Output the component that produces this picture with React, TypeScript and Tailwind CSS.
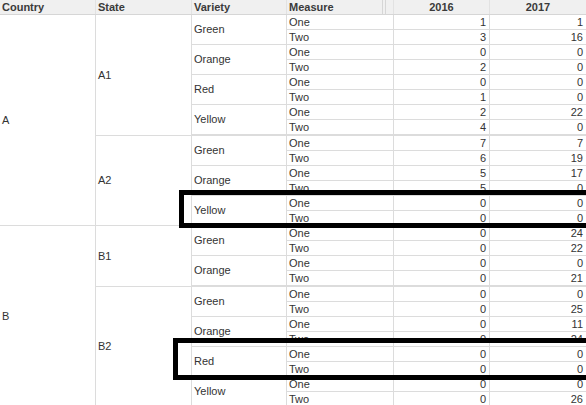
import React from "react";

type Variety = {
  name: string;
  one: [number, number];
  two: [number, number];
};

type State = { name: string; varieties: Variety[] };
type Country = { name: string; states: State[] };

const data: Country[] = [
  {
    name: "A",
    states: [
      {
        name: "A1",
        varieties: [
          { name: "Green", one: [1, 1], two: [3, 16] },
          { name: "Orange", one: [0, 0], two: [2, 0] },
          { name: "Red", one: [0, 0], two: [1, 0] },
          { name: "Yellow", one: [2, 22], two: [4, 0] },
        ],
      },
      {
        name: "A2",
        varieties: [
          { name: "Green", one: [7, 7], two: [6, 19] },
          { name: "Orange", one: [5, 17], two: [5, 0] },
          { name: "Yellow", one: [0, 0], two: [0, 0] },
        ],
      },
    ],
  },
  {
    name: "B",
    states: [
      {
        name: "B1",
        varieties: [
          { name: "Green", one: [0, 24], two: [0, 22] },
          { name: "Orange", one: [0, 0], two: [0, 21] },
        ],
      },
      {
        name: "B2",
        varieties: [
          { name: "Green", one: [0, 0], two: [0, 25] },
          { name: "Orange", one: [0, 11], two: [0, 24] },
          { name: "Red", one: [0, 0], two: [0, 0] },
          { name: "Yellow", one: [0, 0], two: [0, 26] },
        ],
      },
    ],
  },
];

const MeasureRow = ({ label, values }: { label: string; values: [number, number] }) => (
  <div className="flex h-[15px] border-b border-[#dcdcdc] leading-[14px]">
    <div className="w-[107px] border-l border-[#dcdcdc] pl-[2px]">{label}</div>
    <div className="w-[96px] border-l border-[#dcdcdc] pr-[3px] text-right">{values[0]}</div>
    <div className="w-[97px] border-l border-[#dcdcdc] pr-[3px] text-right">{values[1]}</div>
  </div>
);

export default function App() {
  return (
    <div
      className="relative h-[405px] w-[586px] overflow-hidden bg-white text-[11px] text-[#333]"
      style={{ fontFamily: '"Liberation Sans", Arial, sans-serif' }}
    >
      {/* header */}
      <div className="flex h-[15px] border-b border-[#d6d6d6] bg-[#f0f0f0] font-bold leading-[14px] text-[#3a3a3a]">
        <div className="w-[95px] pl-[2px]">Country</div>
        <div className="w-[96px] border-l border-[#e2e2e2] pl-[2px]">State</div>
        <div className="w-[95px] border-l border-[#e2e2e2] pl-[2px]">Variety</div>
        <div className="relative w-[107px] border-l border-[#e2e2e2] pl-[2px]">
          Measure
          <div className="absolute left-[95px] top-0 h-[14px] w-[4px] border-x border-[#d6d6d6]" />
        </div>
        <div className="w-[96px] border-l border-[#e2e2e2] text-center">2016</div>
        <div className="w-[97px] border-l border-[#e2e2e2] text-center">2017</div>
      </div>

      {data.map((c) => (
        <div key={c.name} className="flex border-b border-[#dcdcdc]">
          <div className="flex w-[95px] items-center pl-[2px]">{c.name}</div>
          <div className="flex flex-col">
            {c.states.map((s, si) => (
              <div
                key={s.name}
                className={si < c.states.length - 1 ? "flex border-b border-[#dcdcdc]" : "flex"}
              >
                <div className="flex w-[96px] items-center border-l border-[#dcdcdc] pl-[2px]">
                  {s.name}
                </div>
                <div className="flex flex-col">
                  {s.varieties.map((v, vi) => {
                    const last = si === c.states.length - 1 && vi === s.varieties.length - 1;
                    return (
                      <div key={v.name} className="flex">
                        <div className="flex w-[95px] items-center border-b border-l border-[#dcdcdc] pl-[2px]">
                          {v.name}
                        </div>
                        <div className={last ? "flex flex-col -mb-px" : "flex flex-col"}>
                          <MeasureRow label="One" values={v.one} />
                          <MeasureRow label="Two" values={v.two} />
                        </div>
                      </div>
                    );
                  })}
                </div>
              </div>
            ))}
          </div>
        </div>
      ))}

      {/* highlight boxes */}
      <div className="absolute left-[179px] top-[190px] h-[38px] w-[420px] border-[5px] border-black" />
      <div className="absolute left-[173px] top-[338px] h-[42px] w-[430px] border-[5px] border-black" />
    </div>
  );
}
